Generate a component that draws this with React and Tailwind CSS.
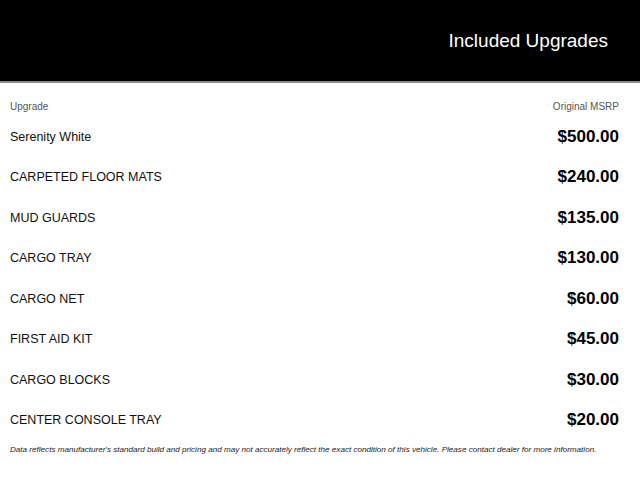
import React from "react";

const upgrades = [
    { name: "Serenity White", price: "$500.00" },
    { name: "CARPETED FLOOR MATS", price: "$240.00" },
    { name: "MUD GUARDS", price: "$135.00" },
    { name: "CARGO TRAY", price: "$130.00" },
    { name: "CARGO NET", price: "$60.00" },
    { name: "FIRST AID KIT", price: "$45.00" },
    { name: "CARGO BLOCKS", price: "$30.00" },
    { name: "CENTER CONSOLE TRAY", price: "$20.00" },
];

export default function App() {
    return (
        <div className="w-[640px] h-[480px] bg-white font-['Liberation_Sans',Arial,sans-serif] overflow-hidden">
            <div className="h-[83px] bg-black border-b-2 border-[#8a8a8a] flex items-center justify-end pr-[32px]">
                <h1 className="text-[19px] text-white leading-none">Included Upgrades</h1>
            </div>

            <div className="px-[10px] pr-[21px]">
                <div className="mt-[17px] h-[12px] flex justify-between items-center text-[10px] text-[#555]">
                    <span>Upgrade</span>
                    <span>Original MSRP</span>
                </div>

                <div className="mt-[4px]">
                    {upgrades.map((u) => (
                        <div key={u.name} className="h-[40.5px] flex justify-between items-center">
                            <span className="text-[12.5px] text-[#111] pt-[2px]">{u.name}</span>
                            <span className="text-[17px] font-bold text-black">{u.price}</span>
                        </div>
                    ))}
                </div>

                <p className="mt-[4px] text-[8.1px] leading-[11px] italic text-[#222] whitespace-nowrap">
                    Data reflects manufacturer's standard build and pricing and may not accurately reflect the exact condition of this vehicle. Please contact dealer for more information.
                </p>
            </div>
        </div>
    );
}
